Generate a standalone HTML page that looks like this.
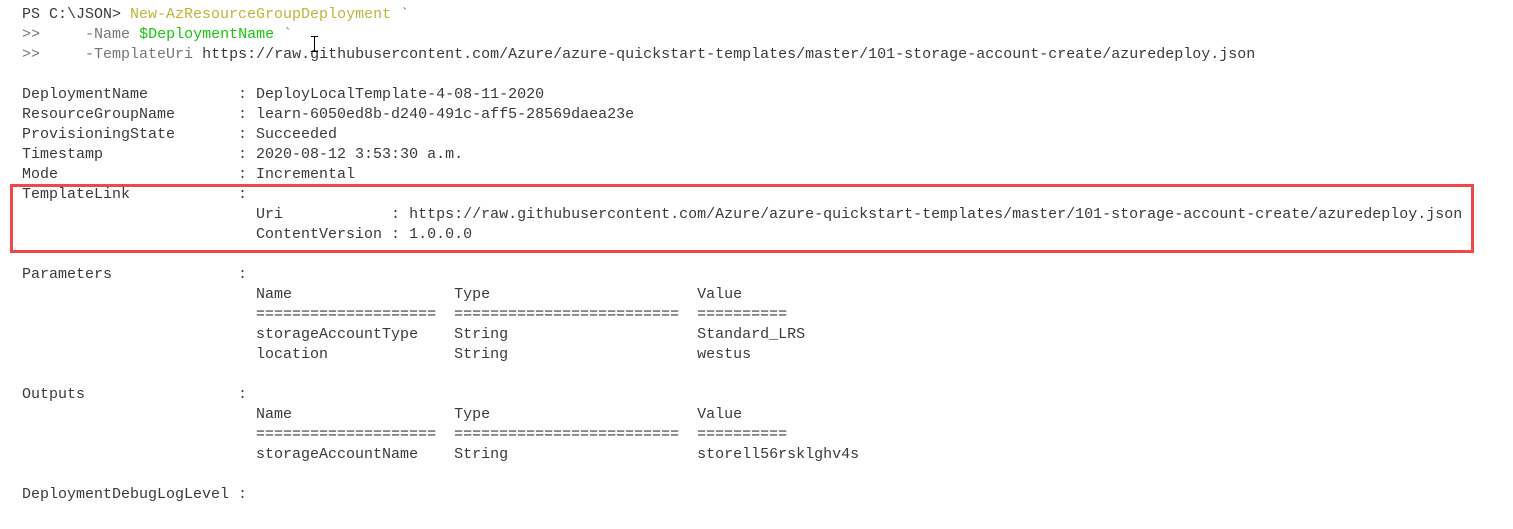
<!DOCTYPE html>
<html><head><meta charset="utf-8"><style>
html,body{margin:0;padding:0;background:#fff;width:1513px;height:529px;overflow:hidden;}
pre{margin:0;position:absolute;left:22px;top:5px;font-family:"Liberation Mono",monospace;font-size:15px;line-height:20px;color:#3a3a3a;}
.y{color:#bdb43a}.g{color:#16c60c}.d{color:#767676}
.box{position:absolute;left:10px;top:184px;width:1458px;height:63px;border:3px solid #f04848;}
.cur{position:absolute;left:314px;top:36px;width:1px;height:16px;background:#000;}
.cur:before,.cur:after{content:"";position:absolute;left:-3px;width:7px;height:1px;background:#000;}
.cur:before{top:0}.cur:after{bottom:0}
</style></head><body>
<div class="box"></div>
<pre>PS C:\JSON&gt; <span class="y">New-AzResourceGroupDeployment</span> <span class="d">`</span>
<span class="d">&gt;&gt;</span>     <span class="d">-Name</span> <span class="g">$DeploymentName</span> <span class="d">`</span>
<span class="d">&gt;&gt;</span>     <span class="d">-TemplateUri</span> https://raw.githubusercontent.com/Azure/azure-quickstart-templates/master/101-storage-account-create/azuredeploy.json

DeploymentName          : DeployLocalTemplate-4-08-11-2020
ResourceGroupName       : learn-6050ed8b-d240-491c-aff5-28569daea23e
ProvisioningState       : Succeeded
Timestamp               : 2020-08-12 3:53:30 a.m.
Mode                    : Incremental
TemplateLink            :
                          Uri            : https://raw.githubusercontent.com/Azure/azure-quickstart-templates/master/101-storage-account-create/azuredeploy.json
                          ContentVersion : 1.0.0.0

Parameters              :
                          Name                  Type                       Value
                          ====================  =========================  ==========
                          storageAccountType    String                     Standard_LRS
                          location              String                     westus

Outputs                 :
                          Name                  Type                       Value
                          ====================  =========================  ==========
                          storageAccountName    String                     storell56rsklghv4s

DeploymentDebugLogLevel :
</pre>
<div class="cur"></div>
</body></html>
